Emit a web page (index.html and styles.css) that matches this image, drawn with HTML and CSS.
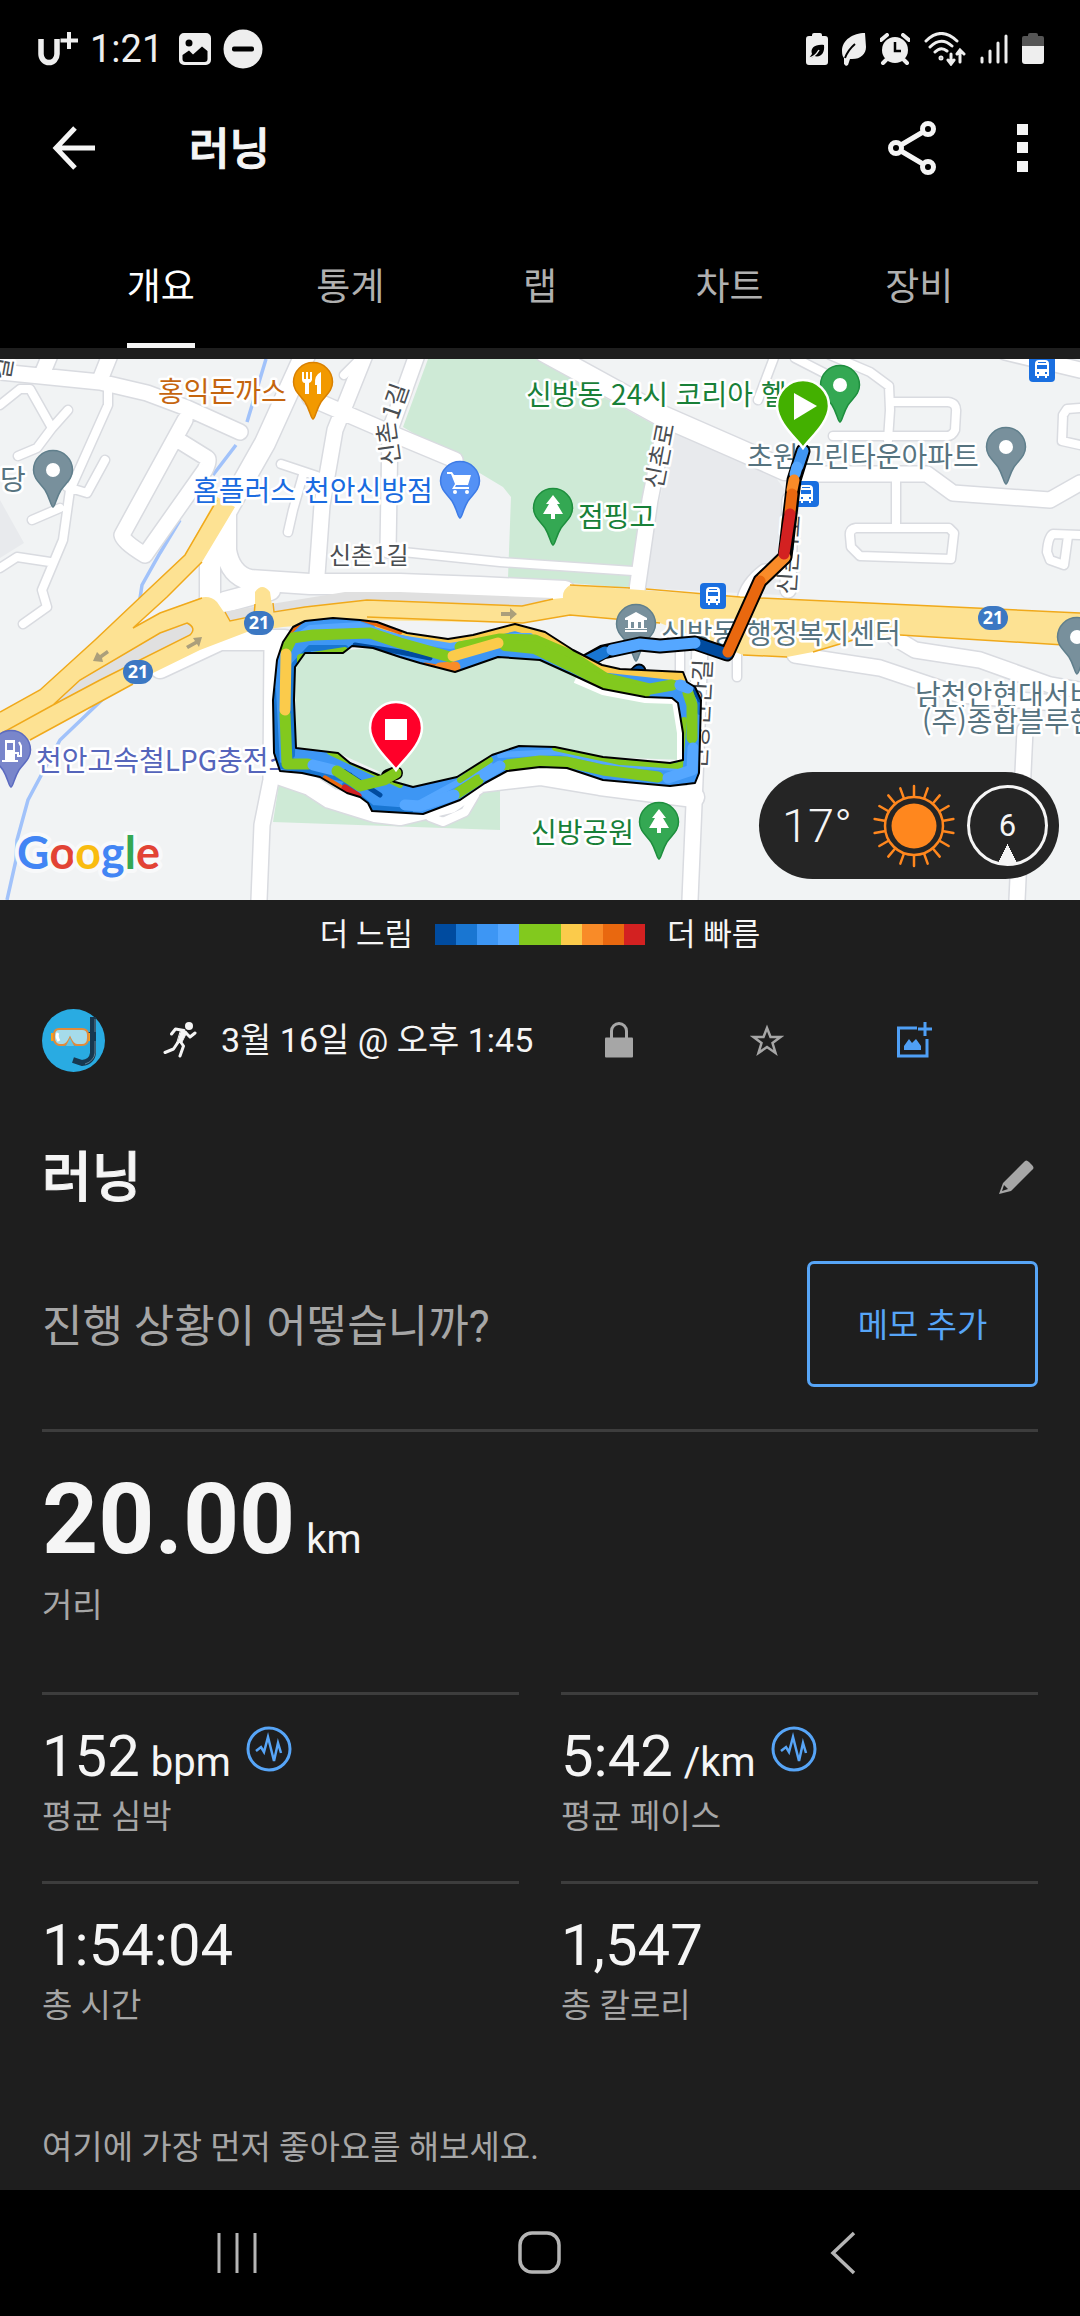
FILE: index.html
```html
<!DOCTYPE html>
<html lang="ko">
<head>
<meta charset="utf-8">
<meta name="viewport" content="width=device-width, initial-scale=1">
<title>러닝</title>
<link rel="stylesheet" href="styles.css">
</head>
<body>
<div class="screen">
  <header class="top">
    <div class="status">
      <div class="status-left">
        <svg width="40" height="40" viewBox="0 0 40 40" fill="none" stroke="#eee" aria-label="U+"><path stroke-width="5.500" d="M3 10V25a7.500 8 0 0 0 16 0V10"/><path stroke-width="4" d="M31 3V20M22.500 11.500H40"/></svg>
        <span class="clock">1:21</span>
        <svg width="32" height="32" viewBox="0 0 32 32" fill="#eee"><path fill-rule="evenodd" d="M5 0H27a5 5 0 0 1 5 5V27a5 5 0 0 1-5 5H5a5 5 0 0 1-5-5V5a5 5 0 0 1 5-5ZM10 6.500a3.500 3.500 0 1 0 0 7 3.500 3.500 0 0 0 0-7ZM3.500 22V26a3 3 0 0 0 3 3H25.500a3 3 0 0 0 3-3V18L23 13.500 14 21.500 10 17.500Z"/></svg>
        <svg width="40" height="40" viewBox="0 0 40 40"><circle cx="20" cy="20" r="19.500" fill="#eee"/><rect x="9" y="17.500" width="22" height="5" rx="2" fill="#000"/></svg>
      </div>
      <div class="status-right">
        <svg width="22" height="32" viewBox="0 0 22 32"><path fill="#eee" d="M6 3V2q0-2 2-2h6q2 0 2 2v1h3q3 0 3 3v23q0 3-3 3H3q-3 0-3-3V6q0-3 3-3Z"/><path d="M3 25c3 0 4-1 5-2 7 2 11-3 10-11C9 11 4 15 6 21" fill="#000"/><path d="M3 25Q9 24 13 17" fill="none" stroke="#eee" stroke-width="1.500"/></svg>
        <svg width="24" height="33" viewBox="0 0 24 33"><path fill="#eee" d="M23 0C11 0 0 7 0 18c0 4 1 6 2 7l0 6 2 2 2-1 2-6c10 1 16-5 16-12Z"/><path d="M3 25Q6 17 13 11" fill="none" stroke="#000" stroke-width="2"/></svg>
        <svg width="30" height="32" viewBox="0 0 30 32"><circle cx="15" cy="17" r="13" fill="#eee"/><path d="M1 7 7 2M29 7 23 2M6 27 3 30M24 27 27 30" stroke="#eee" stroke-width="4" stroke-linecap="round"/><path d="M15 9V18H21" fill="none" stroke="#000" stroke-width="2.500"/></svg>
        <svg width="42" height="34" viewBox="0 0 42 34" fill="none" stroke="#eee" stroke-width="3" stroke-linecap="round"><path d="M2 9Q17-6 33 9M6 15Q17 4 28 14M11 20Q17 14 23 19M27 22V31M24 28l3 4 3-4M36 30V19M33 22l3-4 4 4"/><circle cx="17" cy="26" r="1"/></svg>
        <svg width="28" height="32" viewBox="0 0 28 32" stroke="#eee" stroke-width="3" stroke-linecap="round"><path d="M2 25v4M10 18v11M18 10v19M26 3v26"/></svg>
        <svg width="22" height="32" viewBox="0 0 22 32"><path fill="#555" d="M0 14V5q0-2 2-2H6V2q0-2 2-2h6q2 0 2 2v1h4q2 0 2 2v9Z"/><path fill="#eee" d="M0 13H22V28q0 3-3 3H3q-3 0-3-3Z"/></svg>
      </div>
    </div>
    <div class="toolbar">
      <button class="icon-btn back" aria-label="뒤로"><svg width="44" height="44" viewBox="0 0 44 44" fill="none" stroke="#f5f5f5" stroke-width="5"><path d="M23 2 4 22l19 20M4 22H43"/></svg></button>
      <h1>러닝</h1>
      <button class="icon-btn share" aria-label="공유"><svg width="50" height="56" viewBox="0 0 50 56" fill="none" stroke="#f5f5f5" stroke-width="5"><circle cx="9" cy="28" r="5.500"/><circle cx="41" cy="9" r="5.500"/><circle cx="41" cy="47" r="5.500"/><path d="M14 25 36 12M14 31 36 44"/></svg></button>
      <button class="icon-btn" aria-label="더보기"><svg width="11" height="48" viewBox="0 0 11 48" fill="#f5f5f5"><path d="M0 0H11V11H0ZM0 18H11V29H0ZM0 37H11V48H0Z"/></svg></button>
    </div>
    <nav class="tabs">
      <button class="tab active"><span>개요</span></button>
      <button class="tab"><span>통계</span></button>
      <button class="tab"><span>랩</span></button>
      <button class="tab"><span>차트</span></button>
      <button class="tab"><span>장비</span></button>
    </nav>
  </header>

  <main>
    <div class="map-wrap">
    <svg class="map" viewBox="0 359 1080 541" preserveAspectRatio="xMidYMid slice">
      <defs>
        <path id="pin" stroke-width="1.500" d="M0 37C-2 37-3 28-8 20-13 13-19.500 9-19.500 0A19.500 19.500 0 1 1 19.500 0C19.500 9 13 13 8 20 3 28 2 37 0 37Z"/>
        <path id="bigpin" stroke="#fff" stroke-width="2.500" d="M0 42C-5 34-26 17-26 0A26 26 0 1 1 26 0C26 17 5 34 0 42Z"/>
        <g id="tree" fill="#fff"><path d="M0-13-7-4H-4L-10 6H-2V11H2V6H10L4-4H7Z"/></g>
        <g id="bus"><rect x="-13" y="-13" width="26" height="26" rx="4" fill="#1a6fe0"/><path fill="#fff" d="M-7 7V-5Q-7-9-3-9H3Q7-9 7-5V7H5V9H3V7H-3V9H-5V7Z"/><path fill="#1a6fe0" d="M-5-4H5V0H-5ZM-5 3H-3V5H-5ZM3 3H5V5H3ZM-4-7H4V-6H-4Z"/></g>
        <g id="shield"><rect x="-15" y="-12" width="30" height="24" rx="12" fill="#3c78c3"/><text class="route" y="6">21</text></g>
        <g id="r10"><path d="M108 385V405L70 490 63 540 42 590 47 607 23 624M0 405 20 389 30 389 52 428 68 410M52 428 37 448 18 456M67 487 87 493 105 460M60 508 32 520M50 562 17 557 0 568M281 464 320 477M303 475 293 510 288 532M830 355 870 372 889 386 890 410 888 440M893 402H948Q957 403 956 412L955 430Q952 437 945 436H833M896 475V527M856 528Q849 529 850 536L851 547 860 556 951 559 954 533 949 528ZM1080 408 1067 409 1063 415 1062 441 1080 445M1080 535 1053 534Q1048 537 1047 552L1050 560 1064 565 1068 536M403 552 500 562 633 571M680 650V672M737 648V677M360 359 344 375M775 355 758 400M795 358 830 376M430 817 443 822 465 812 475 795"/></g>
        <g id="r14"><path d="M0 372 100 382 147 393 187 408 240 432M185 420 122 535Q123 542 145 555L205 470Q210 460 207 458L178 440M50 355 43 372M110 355 100 380M365 355 335 430 322 505 317 575M310 398 400 437 455 460M417 355 390 430 388 550M803 474H927L953 493 1050 500 1080 483M795 655 880 668 960 695 1080 705M895 638 915 650 980 660 1050 685 1080 690M1025 730 1017 900M1005 352 1080 370M665 425 650 500 637 590M272 645 271 780 262 825 259 900M700 645 695 780 690 900M788 590 790 500M745 600Q748 585 765 572"/></g>
        <g id="r20"><path d="M545 352 600 382 660 415 740 450 785 470M305 355 265 443 226 512 226 550Q230 575 250 580L310 584 400 584 480 587 565 591M210 545V610M225 602 270 590M281 775 310 785 330 798 375 812 400 815 450 803 480 782 540 775 600 785 694 797M285 640H220L160 668"/></g>
        <path id="ring" d="M283 642 293 627 305 621 333 618 360 620 377 622 407 633 448 639 473 635 515 624 545 632 573 650 602 665 620 669 683 672 687 682 695 687 701 700 699 773 695 783 670 786 603 780 567 768 540 767 507 771 485 783 460 800 423 814 372 811 368 803 360 797 347 793 320 777 302 773 280 771 274 753 273 700 277 660ZM305 653 343 653 352 646 373 648 400 657 420 663 455 672 498 657 540 660 573 675 603 689 645 697 672 698 678 703 683 733 683 760 670 763 603 757 555 747 519 746 492 755 457 777 413 787 395 782 350 763 338 753 296 748 294 700 295 667Z"/>
        <clipPath id="ringclip"><use href="#ring" clip-rule="evenodd"/></clipPath>
        <path id="walk1" d="M401 470 395 428 415 370"/>
      </defs>
      <rect y="359" width="1080" height="541" fill="#f1f3f4"/>
      <path fill="#e8eaed" d="M0 500 24 543 0 558ZM675 430 770 470 785 490 780 595 640 588Z"/>
      <path fill="#ceead6" d="M428 359H540L600 395 655 425 630 588 508 578 511 497 503 487 463 463 403 427ZM281 770 500 775V830L273 822Z"/>
      <path fill="none" stroke="#a1c2fa" stroke-width="3.500" d="M266 359 247 422M236 445 213 475M180 520 160 553 142 585 139 605M105 697 60 740 28 800 17 840 16 860 7 900"/>
      <g fill="none" stroke="#d9dbe0" stroke-linejoin="round" stroke-linecap="round">
        <use href="#r10" stroke-width="11"/><use href="#r14" stroke-width="18"/><use href="#r20" stroke-width="23"/>
      </g>
      <g fill="none" stroke="#fff" stroke-linejoin="round" stroke-linecap="round">
        <use href="#r10" stroke-width="8"/><use href="#r14" stroke-width="15"/><use href="#r20" stroke-width="20"/>
      </g>
      <path fill="#ceead6" d="M295 667 305 653 373 648 455 672 498 657 540 660 603 689 678 703 683 760 603 757 519 746 457 777 413 787 338 753 296 748Z"/>
      <path fill="none" stroke="#fff" stroke-width="6" d="M575 680 603 692 645 700 675 701 680 733V762"/>
      <path fill="#e0e0e0" d="M222 612 345 592H400L553 598 522 606 367 600 230 621Z"/>
      <path fill="#fde293" d="M217 497 185 555 150 588 95 640 40 690 0 712V757L30 740 153 673 200 650 247 632 283 627 367 620 523 623 570 615 660 623 743 655 787 657 813 652 860 638 900 635 1080 646V613L740 597 570 585Q562 590 563 598L553 599 522 606 367 600 305 607 273 613 270 592Q262 582 255 592V617L230 621 217 602Q210 595 200 598L160 613 133 628 167 597 202 562 235 507Z"/>
      <path fill="#e0e0e0" stroke="#f0a91b" stroke-width="1.500" d="M53 705 80 680 160 633 187 623Q197 628 190 635L100 680Z"/>
      <path fill="none" stroke="#f0a91b" stroke-width="1.500" d="M217 500 185 555 150 588 95 640 40 690 0 712M202 562 167 597 133 628 160 613 202 598M53 705 0 734M30 740 133 684M225 612 230 621 254 616 255 604M273 603 274 612 305 607 367 600 522 606 553 599M570 585 630 588M646 589 740 597 1080 613M367 617 523 623 570 615 660 623M743 655 787 657M813 652 860 638M900 635 1080 646"/>
      <path fill="#ab9f7b" d="M93 661 97 652 100 655 107 650 109 653 102 658 103 662ZM202 637 193 638 195 641 186 646 188 649 197 644 199 647ZM501 612H510V608L517 614 510 620V616H501Z"/>

      <g class="lbl">
        <text class="street" transform="translate(9 381) rotate(-80)">길</text>
        <text class="street" x="329" y="564">신촌1길</text>
        <text class="street"><textPath href="#walk1" startOffset="6">신촌1길</textPath></text>
        <text class="street" transform="translate(662 490) rotate(-79)">신촌로</text>
        <text class="street" transform="translate(795 595) rotate(-86)">신촌4로</text>
        <text class="street" transform="translate(706 770) rotate(-87)">신방안안길</text>
        <text x="158" y="402" fill="#c5650f">홍익돈까스</text>
        <text x="193" y="501" fill="#1a6be0">홈플러스 천안신방점</text>
        <text x="526" y="405" fill="#188038">신방동 24시 코리아 헬</text>
        <text x="747" y="467" fill="#56737f">초원그린타운아파트</text>
        <text x="0" y="490" fill="#56737f">당</text>
        <text x="578" y="527" fill="#188038">점핑고</text>
        <text x="661" y="644" fill="#56737f">신방동 행정복지센터</text>
        <text x="915" y="705" fill="#56737f">남천안현대서비스</text>
        <text x="922" y="732" fill="#56737f">(주)종합블루핸즈</text>
        <text x="36" y="771" fill="#5565bb">천안고속철LPG충전소</text>
        <text x="531" y="843" fill="#188038">신방공원</text>
      </g>
      <use href="#shield" x="259" y="623"/><use href="#shield" x="138" y="672"/><use href="#shield" x="993" y="618"/>
      <use href="#bus" x="713" y="596"/><use href="#bus" x="1042" y="369"/><use href="#bus" x="806" y="494"/>

      <g transform="translate(313 382)"><use href="#pin" fill="#f29900" stroke="#d98000"/><path fill="#fff" d="M-11-10H-9V-3H-7V-10H-5V-3H-3V-10H-1V-2Q-2 1-4 1V12H-8V1Q-11 1-11-3ZM8-10V12H4V3H2Q1-7 8-10Z"/></g>
      <g transform="translate(53 470)"><use href="#pin" fill="#78909c" stroke="#607f8c"/><circle r="7" fill="#fff"/></g>
      <g transform="translate(460 481)"><use href="#pin" fill="#5491f5" stroke="#3d7be6"/><path fill="#fff" d="M-13-9H-8L-6-6H11L8 4H-4L-5 6H9V8H-8L-5 3-9-7H-13Z"/><circle cx="-5" cy="11" r="2" fill="#fff"/><circle cx="7" cy="11" r="2" fill="#fff"/></g>
      <g transform="translate(553 508)"><use href="#pin" fill="#34a853" stroke="#1e8e3e"/><use href="#tree"/></g>
      <g transform="translate(659 822)"><use href="#pin" fill="#34a853" stroke="#1e8e3e"/><use href="#tree"/></g>
      <g transform="translate(636 624)"><use href="#pin" fill="#78909c" stroke="#607f8c"/><path fill="#fff" d="M-11-4V-6L0-12 11-6V-4H8V4H11V8H-11V4H-8V-4ZM-5-2V4H-2V-2ZM2-2V4H5V-2Z"/><path fill="#78909c" d="M-12 5H12V6H-12Z"/></g>
      <g transform="translate(840 385)"><use href="#pin" fill="#34a853" stroke="#1e8e3e"/><circle r="7" fill="#fff"/></g>
      <g transform="translate(1006 447)"><use href="#pin" fill="#78909c" stroke="#607f8c"/><circle r="7" fill="#fff"/></g>
      <g transform="translate(1077 637)"><use href="#pin" fill="#78909c" stroke="#607f8c"/><circle r="7" fill="#fff"/></g>
      <g transform="translate(11 750)"><use href="#pin" fill="#7986cb" stroke="#5c6bc0"/><path fill="#fff" fill-rule="evenodd" d="M-6-10H4V10H7V12H-9V10H-6ZM-4-7V0H2V-7Z"/><path fill="none" stroke="#fff" stroke-width="2" d="M4 3H7V6H10V-4L8-8"/></g>

      <g fill="none" stroke-linejoin="round" stroke-linecap="round">
        <path stroke="#000" stroke-width="15" d="M585 662 603 652 640 644 660 646 695 643 727 654 760 581 785 557 794 480 803 451M634 676 639 671"/>
        <g stroke-width="11">
          <path stroke="#1976d2" d="M585 662 605 652"/><path stroke="#004b9f" d="M697 644 727 654M632 676 639 671"/><path stroke="#55a7ff" d="M612 650 640 644 660 646 695 643"/>
          <path stroke="#4095f2" d="M798 466 803 451"/><path stroke="#55a7ff" d="M795 474 797 467"/><path stroke="#f98b28" d="M762 579 785 557M792 490 794 480"/><path stroke="#e9680f" d="M728 652 760 581M790 512 792 494"/><path stroke="#d32121" d="M784 554 790 514"/>
        </g>
      </g>
      <use href="#ring" fill="#3d96f4" fill-rule="evenodd"/>
      <g clip-path="url(#ringclip)" fill="none" stroke-linejoin="round" stroke-linecap="round">
        <path stroke="#1976d2" stroke-width="6" d="M292 755 294 665 310 648 345 648M273 690 277 765 350 780M345 785 372 808 410 811M700 690V712"/>
        <path stroke="#004b9f" stroke-width="5" d="M345 772 380 795M355 645 400 652 430 658M288 760 350 775M690 683 700 700"/>
        <path stroke="#fbcb4b" stroke-width="14" d="M380 622 448 640 515 624 545 632 600 665 683 674"/>
        <path stroke="#55a7ff" stroke-width="6" d="M285 645 310 628 360 625 400 638 450 646 515 636 530 636M500 755 560 752 620 765 678 768M420 803 490 765"/>
        <path stroke="#82c91e" stroke-width="6" d="M300 665V657L345 650M330 752 400 785M555 748 620 762 680 766 684 720M460 780 490 760"/>
        <path stroke="#e9680f" stroke-width="5" d="M290 632 300 622M362 619 400 632M325 778 345 790M425 665 455 670M592 682 620 688"/>
        <path stroke="#d32121" stroke-width="7" d="M345 788 358 796"/>
        <g stroke-width="11"><path stroke="#f98b28" d="M440 668 455 667"/>
        <path stroke="#82c91e" d="M286 650 292 638 313 635 370 633 400 643 450 657M460 647 500 639 535 640 570 655 605 678 650 689 672 685M688 693 692 705V738M658 777 603 770 567 762 540 761 507 765M478 780 458 793M285 714 287 764H308"/>
        <path stroke="#82c91e" stroke-width="12" d="M505 645 535 648 570 665 605 683 645 692"/>
        <path stroke="#fbcb4b" d="M286 654 285 710M453 656 498 643"/>
        <path stroke="#55a7ff" d="M680 685 688 688M693 748 692 770 668 778M500 766 485 775M454 795 420 806 405 805M313 765 333 770"/></g>
      </g>
      <use href="#ring" fill="none" stroke="#000" stroke-width="2" stroke-linejoin="round"/>
      <path fill="none" stroke="#000" stroke-width="14" stroke-linecap="round" d="M388 776 396 773"/>
      <path fill="none" stroke="#82c91e" stroke-width="11" stroke-linecap="round" stroke-linejoin="round" d="M337 771 360 786 384 780 396 773"/>
      <g transform="translate(803 406)"><use href="#bigpin" fill="#43b000"/><path fill="#fff" d="M-9-13V14L14 0Z"/></g>
      <g transform="translate(396 728)"><use href="#bigpin" fill="#ff0029"/><path fill="#fff" d="M-11-9H11V12H-11Z"/></g>

      <text class="google" x="17" y="869"><tspan fill="#4285f4">G</tspan><tspan fill="#e24335">o</tspan><tspan fill="#f9bc10">o</tspan><tspan fill="#4285f4">g</tspan><tspan fill="#34a853">l</tspan><tspan fill="#e24335">e</tspan></text>
    </svg>
      <div class="weather">
        <span class="temp">17°</span>
        <svg class="sun" width="84" height="84" viewBox="-42 -42 84 84"><circle r="22.500" fill="#ff871e"/><g fill="none" stroke="#ff871e" stroke-width="2.500" stroke-linecap="round"><circle r="29"/><path id="ray" d="M0-30V-40M0 30V40"/><use href="#ray" transform="rotate(20)"/><use href="#ray" transform="rotate(40)"/><use href="#ray" transform="rotate(60)"/><use href="#ray" transform="rotate(80)"/><use href="#ray" transform="rotate(100)"/><use href="#ray" transform="rotate(120)"/><use href="#ray" transform="rotate(140)"/><use href="#ray" transform="rotate(160)"/></g></svg>
        <span class="wind">6</span>
      </div>
    </div>

    <div class="legend">
      <span>더 느림</span>
      <div class="scale"><i class="c1"></i><i class="c2"></i><i class="c3"></i><i class="c4"></i><i class="c5"></i><i class="c5"></i><i class="c6"></i><i class="c7"></i><i class="c8"></i><i class="c9"></i></div>
      <span>더 빠름</span>
    </div>

    <section class="body">
      <div class="info">
        <svg class="avatar" width="63" height="63" viewBox="0 0 63 63"><circle cx="31.500" cy="31.500" r="31.500" fill="#29abe2"/><path d="M51 8V44Q50 53 40 54L31 51" fill="none" stroke="#173850" stroke-width="6"/><path d="M53 10V44Q52 52 43 55" fill="none" stroke="#5d7f93" stroke-width="1"/><path d="M46 24H53V31H46" fill="none" stroke="#173850" stroke-width="2"/><path d="M9 24H12V32H9ZM45 24H48V32H45Z" fill="#f9a01b"/><path d="M17 20H40Q46 20 46 26V29Q46 36 40 36H35Q31 36 28 29 25 36 21 36H17Q12 35 12 29V26Q12 20 17 20Z" fill="#a5dbea" stroke="#e08b3c" stroke-width="2"/><path d="M16 24Q14 27 17 32" fill="none" stroke="#fff" stroke-width="3"/><path d="M24 37 28 29 32 37Z" fill="#5cc5ea"/></svg>
        <svg class="runner" width="34" height="36" viewBox="0 0 34 36" stroke-linecap="round" stroke-linejoin="round"><circle cx="26" cy="4" r="4" fill="#f5f5f5"/><path d="M8.500 12 12.500 7 21 8.500M23 11 27 15 32 11M17 19 20.500 24 17 34M14.500 21 10.500 27 2 30.500" fill="none" stroke="#f5f5f5" stroke-width="3"/><path d="M18 8 24 10 19 20 14 21Z" fill="#f5f5f5" stroke="#f5f5f5"/></svg>
        <span class="date">3월 16일 @ 오후 1:45</span>
        <button class="slot" aria-label="비공개"><svg width="28" height="36" viewBox="0 0 28 36"><path d="M6.500 16V9a7.500 7.500 0 0 1 15 0V16" fill="none" stroke="#a6a6a6" stroke-width="3"/><rect y="15.500" width="28" height="20" rx="1" fill="#a6a6a6"/></svg></button>
        <button class="slot" aria-label="즐겨찾기"><svg width="34" height="33" viewBox="0 0 34 33"><path d="M17 4 20.500 13H30.500L22.500 19 25.500 29 17 23 8.500 29 11.500 19 3.500 13H13.500Z" fill="none" stroke="#a6a6a6" stroke-width="2.500"/></svg></button>
        <button class="slot" aria-label="사진 추가"><svg width="36" height="36" viewBox="0 0 36 36"><path d="M20 6H1.500V34H30V17" fill="none" stroke="#4f9ff5" stroke-width="3"/><path d="M28 0V14M21 7H35" stroke="#4f9ff5" stroke-width="3"/><path d="M7 28V24L12 17 15 21 19 17 24 24V28Z" fill="#4f9ff5"/></svg></button>
      </div>
      <div class="title-row">
        <h2>러닝</h2>
        <button class="icon-btn" aria-label="이름 편집"><svg width="44" height="36" viewBox="0 0 44 36"><path d="M5 35 9 24 30 3Q32 0 35 3L38 6Q41 9 38 11L17 32ZM8 32 14 30 10 26Z" fill="#a6a6a6" fill-rule="evenodd"/></svg></button>
      </div>
      <div class="memo">
        <p>진행 상황이 어떻습니까?</p>
        <button>메모 추가</button>
      </div>
      <div class="distance">
        <div class="value"><strong>20.00</strong><span class="unit">km</span></div>
        <div class="label">거리</div>
      </div>
      <div class="grid">
        <div class="cell"><div class="value"><span>152</span><span class="unit">bpm</span><svg class="pulse" width="46" height="46" viewBox="0 0 46 46" fill="none" stroke="#57a5f7"><circle cx="23" cy="23" r="21" stroke-width="3"/><path stroke-width="2.500" d="M10 25 15 21 18 26 22 11 28 35 32 17 35 27"/></svg></div><div class="label">평균 심박</div></div>
        <div class="cell"><div class="value"><span>5:42</span><span class="unit">/km</span><svg class="pulse" width="46" height="46" viewBox="0 0 46 46" fill="none" stroke="#57a5f7"><circle cx="23" cy="23" r="21" stroke-width="3"/><path stroke-width="2.500" d="M10 25 15 21 18 26 22 11 28 35 32 17 35 27"/></svg></div><div class="label">평균 페이스</div></div>
        <div class="cell"><div class="value"><span>1:54:04</span></div><div class="label">총 시간</div></div>
        <div class="cell"><div class="value"><span>1,547</span></div><div class="label">총 칼로리</div></div>
      </div>
      <p class="likes">여기에 가장 먼저 좋아요를 해보세요.</p>
    </section>
  </main>

  <nav class="sysnav">
    <button aria-label="최근 앱"><svg width="40" height="44" viewBox="0 0 40 44" stroke="#b5b5b5" stroke-width="3"><path d="M2 2V42M20 2V42M38 2V42"/></svg></button>
    <button aria-label="홈"><svg width="44" height="44" viewBox="0 0 44 44" fill="none" stroke="#b5b5b5" stroke-width="3.500"><rect x="2" y="2" width="39" height="39" rx="12"/></svg></button>
    <button aria-label="뒤로"><svg width="26" height="44" viewBox="0 0 26 44" fill="none" stroke="#b5b5b5" stroke-width="3.500"><path d="M24 2 3 22 24 42"/></svg></button>
  </nav>
</div>
</body>
</html>
```
FILE: styles.css
```css
* { box-sizing: border-box; }
body { margin: 0; background: #000; color: #f5f5f5; font-family: Roboto, "Noto Sans CJK KR", sans-serif; }
button { background: none; border: 0; padding: 0; margin: 0; color: inherit; font: inherit; cursor: pointer; }
h1, h2, p { margin: 0; }
svg { display: block; flex: none; }
.screen { min-height: 100vh; display: flex; flex-direction: column; }

.status { height: 98px; padding: 0 36px 0 38px; display: flex; justify-content: space-between; align-items: center; }
.status-left, .status-right { display: flex; align-items: center; }
.status-left { gap: 12px; }
.clock { font-size: 38px; line-height: 48px; padding-right: 4px; color: #eee; }
.status-right { gap: 14px; }

.toolbar { height: 100px; padding: 0 52px; display: flex; align-items: center; }
.back { margin-right: 93px; }
.share { margin-right: 80px; }
h1 { flex: 1; padding-top: 4px; font-size: 44px; line-height: 60px; font-weight: 500; -webkit-text-stroke: 1px; }

.tabs { display: grid; grid-template-columns: repeat(5, 1fr); padding: 26px 66px 0; }
.tab { font-size: 37px; color: #b0b0b0; }
.tab span { display: inline-block; line-height: 110px; border: solid transparent; border-width: 9px 0 5px; }
.tab.active { color: #fff; }
.tab.active span { border-bottom-color: #f5f5f5; }

main { flex: 1; background: #1e1e1e; padding-top: 11px; }
.map-wrap { position: relative; }
.map { width: 100%; height: auto; aspect-ratio: 1080 / 541; }
.lbl text { font: 28px "Noto Sans CJK KR", sans-serif; stroke: #fff; stroke-width: 5px; stroke-linejoin: round; paint-order: stroke; }
.lbl .street { font-size: 24px; fill: #4a4e52; }
.route { font: 700 18px "Noto Sans", sans-serif; fill: #fff; text-anchor: middle; }
.google { font: 700 45px Lato, sans-serif; stroke: #f8f9fa; stroke-width: 8px; stroke-linejoin: round; paint-order: stroke; }
.weather { position: absolute; right: 21px; bottom: 21px; width: 300px; height: 107px; border-radius: 54px; background: #252525; padding: 0 11px 0 23px; display: flex; align-items: center; }
.temp { font-size: 47px; font-weight: 300; }
.sun { margin: 0 11px 0 auto; }
.wind { width: 81px; height: 81px; border: 3px solid #f5f5f5; border-radius: 50%; font-size: 31px; line-height: 76px; text-align: center; background: conic-gradient(from 154deg at 50% 74%, #f5f5f5 52deg, transparent 0); }

.legend { height: 68px; display: flex; justify-content: center; align-items: center; gap: 22px; font-size: 31px; }
.legend span { padding-bottom: 5px; }
.scale { display: flex; }
.scale i { width: 21px; height: 21px; }
.c1 { background: #004b9f; } .c2 { background: #1976d2; } .c3 { background: #3d96f4; }
.c4 { background: #55a7ff; } .c5 { background: #82c91e; } .c6 { background: #fbcb4b; }
.c7 { background: #f98b28; } .c8 { background: #e9680f; } .c9 { background: #d32121; }

.body { padding: 22px 42px 18px; }
.info { height: 100px; display: flex; align-items: center; padding-right: 49px; }
.runner { margin: 0 24px 0 58px; }
.date { flex: 1; padding-bottom: 5px; font-size: 34px; white-space: nowrap; }
.slot { width: 148px; display: flex; justify-content: center; }
.title-row { margin-top: 43px; height: 88px; display: flex; align-items: center; justify-content: space-between; }
h2 { padding-top: 4px; font-size: 54px; font-weight: 500; line-height: 80px; -webkit-text-stroke: 1px; }
.memo { margin-top: 40px; padding-bottom: 42px; border-bottom: 3px solid #3d3d3d; display: flex; align-items: center; justify-content: space-between; }
.memo p { padding-bottom: 3px; font-size: 44px; color: #a6a6a6; }
.memo button { width: 231px; height: 126px; padding-bottom: 3px; border: 3px solid #57a5f7; border-radius: 7px; color: #57a5f7; font-size: 33px; }

.value { display: flex; align-items: baseline; }
.label { font-size: 33px; line-height: 48px; color: #a6a6a6; }
.unit { font-size: 40px; line-height: 48px; margin-left: 11px; }
.distance { padding: 36px 0 62px; }
.distance .value { font-size: 98px; line-height: 104px; margin-bottom: 10px; }
.distance strong { font-weight: 700; }
.grid { display: grid; grid-template-columns: 1fr 1fr; column-gap: 42px; }
.cell { border-top: 3px solid #3d3d3d; padding: 26px 0 40px; }
.cell .value { font-size: 58px; line-height: 70px; margin-bottom: 2px; }
.pulse { align-self: flex-start; margin: 5px 0 0 15px; }
.likes { margin-top: 54px; font-size: 33px; line-height: 48px; color: #a6a6a6; }

.sysnav { height: 126px; padding: 0 86px; display: grid; grid-template-columns: repeat(3, 1fr); background: #000; }
.sysnav button { display: flex; align-items: center; justify-content: center; }
```
